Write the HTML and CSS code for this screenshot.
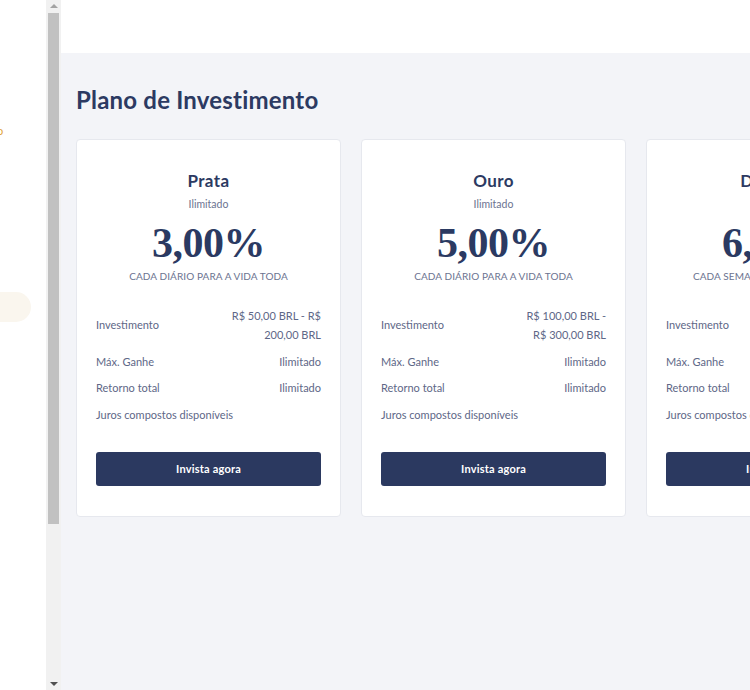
FILE: index.html
```html
<!DOCTYPE html>
<html lang="pt">
<head>
<meta charset="utf-8">
<link rel="stylesheet" href="styles.css">
</head>
<body>
<div class="app">
  <aside class="sidebar">
    <div class="side-inner">
      <div class="side-link">Saldo</div>
      <div class="side-active"></div>
    </div>
    <div class="scrollbar">
      <div class="sb-arrow up"></div>
      <div class="sb-thumb"></div>
      <div class="sb-rest"></div>
      <div class="sb-arrow down"></div>
    </div>
  </aside>
  <main class="main">
    <header class="topbar"></header>
    <section class="content">
      <h1 class="title">Plano de Investimento</h1>
      <div class="cards">
        <div class="card">
          <div class="plan-name">Prata</div>
          <div class="plan-sub">Ilimitado</div>
          <div class="plan-rate">3,00%</div>
          <div class="plan-period">CADA DIÁRIO PARA A VIDA TODA</div>
          <div class="rows">
            <div class="row"><span>Investimento</span><span class="val">R$ 50,00 BRL - R$<br>200,00 BRL</span></div>
            <div class="row"><span>Máx. Ganhe</span><span class="val">Ilimitado</span></div>
            <div class="row"><span>Retorno total</span><span class="val">Ilimitado</span></div>
            <div class="row"><span>Juros compostos disponíveis</span></div>
          </div>
          <button class="btn">Invista agora</button>
        </div>
        <div class="card">
          <div class="plan-name">Ouro</div>
          <div class="plan-sub">Ilimitado</div>
          <div class="plan-rate">5,00%</div>
          <div class="plan-period">CADA DIÁRIO PARA A VIDA TODA</div>
          <div class="rows">
            <div class="row"><span>Investimento</span><span class="val">R$ 100,00 BRL -<br>R$ 300,00 BRL</span></div>
            <div class="row"><span>Máx. Ganhe</span><span class="val">Ilimitado</span></div>
            <div class="row"><span>Retorno total</span><span class="val">Ilimitado</span></div>
            <div class="row"><span>Juros compostos disponíveis</span></div>
          </div>
          <button class="btn">Invista agora</button>
        </div>
        <div class="card">
          <div class="plan-name">Diamante</div>
          <div class="plan-sub">Ilimitado</div>
          <div class="plan-rate">6,00%</div>
          <div class="plan-period">CADA SEMANAL PARA A VIDA TODA</div>
          <div class="rows">
            <div class="row"><span>Investimento</span><span class="val">R$ 500,00 BRL -<br>R$ 1000,00 BRL</span></div>
            <div class="row"><span>Máx. Ganhe</span><span class="val">Ilimitado</span></div>
            <div class="row"><span>Retorno total</span><span class="val">Ilimitado</span></div>
            <div class="row"><span>Juros compostos disponíveis</span></div>
          </div>
          <button class="btn">Invista agora</button>
        </div>
      </div>
    </section>
  </main>
</div>
</body>
</html>
```

FILE: styles.css
```css
* { box-sizing: border-box; }
html, body { margin: 0; padding: 0; }
body {
  width: 750px;
  height: 690px;
  overflow: hidden;
  font-family: Lato, "Noto Sans", sans-serif;
  background: #f3f4f8;
}
.app {
  display: flex;
  height: 690px;
}
.sidebar {
  width: 61px;
  flex: none;
  display: flex;
  background: #ffffff;
}
.side-inner {
  width: 46px;
  overflow: hidden;
  padding-top: 124px;
}
.side-link {
  margin-left: -23px;
  font-size: 11px;
  line-height: 14px;
  color: #e0a23a;
}
.side-active {
  margin-top: 154px;
  width: 31px;
  height: 30px;
  background: #faf6ee;
  border-radius: 0 15px 15px 0;
}
.scrollbar {
  width: 15px;
  flex: none;
  background: #f1f1f1;
  display: flex;
  flex-direction: column;
  align-items: center;
}
.sb-arrow {
  height: 12px;
  width: 15px;
  display: flex;
  align-items: center;
  justify-content: center;
}
.sb-arrow::before {
  content: "";
  width: 0;
  height: 0;
  border-left: 4px solid transparent;
  border-right: 4px solid transparent;
}
.sb-arrow.up::before { border-bottom: 4px solid #a3a3a3; }
.sb-arrow.down::before { border-top: 4px solid #505050; }
.sb-thumb {
  width: 11px;
  height: 511px;
  margin-top: 1px;
  background: #c1c1c1;
}
.sb-rest { flex: 1; }
.main {
  flex: 1;
  display: flex;
  flex-direction: column;
  min-width: 0;
}
.topbar {
  height: 53px;
  background: #ffffff;
  flex: none;
}
.content {
  padding: 31px 0 0 15px;
  overflow: hidden;
}
.title {
  margin: 0 0 24px;
  font-size: 24px;
  line-height: 31px;
  font-weight: 700;
  color: #2c3a62;
  letter-spacing: 0.2px;
}
.cards {
  display: flex;
  gap: 20px;
}
.card {
  width: 265px;
  flex: none;
  background: #ffffff;
  border: 1px solid #e6e8ee;
  border-radius: 4px;
  padding: 31px 19px 30px 19px;
  display: flex;
  flex-direction: column;
  align-items: stretch;
}
.plan-name {
  text-align: center;
  font-size: 17px;
  line-height: 20px;
  font-weight: 700;
  color: #2c3a62;
  letter-spacing: 0.4px;
}
.plan-sub {
  text-align: center;
  font-size: 10.5px;
  line-height: 14px;
  margin-top: 6px;
  color: #6b7390;
}
.plan-rate {
  text-align: center;
  font-family: "Liberation Serif", "Times New Roman", serif;
  font-weight: 700;
  font-size: 42px;
  line-height: 44px;
  margin-top: 10px;
  color: #2b3a62;
  letter-spacing: -0.5px;
}
.plan-period {
  text-align: center;
  font-size: 10px;
  line-height: 14px;
  margin-top: 4px;
  color: #6b7390;
  letter-spacing: 0.1px;
}
.rows {
  margin-top: 24px;
  display: flex;
  flex-direction: column;
  gap: 7.5px;
}
.row {
  display: flex;
  justify-content: space-between;
  align-items: center;
  font-size: 11px;
  line-height: 19px;
  color: #5e6787;
}
.row .val { text-align: right; }
.row .val br + * { display: none; }
.rows .row:first-child { line-height: 18.5px; }
.btn {
  margin-top: 28px;
  height: 34px;
  flex: none;
  border: none;
  border-radius: 3px;
  background: #2b3960;
  color: #ffffff;
  font-family: Lato, "Noto Sans", sans-serif;
  font-size: 11px;
  font-weight: 700;
  letter-spacing: 0.2px;
}
```
